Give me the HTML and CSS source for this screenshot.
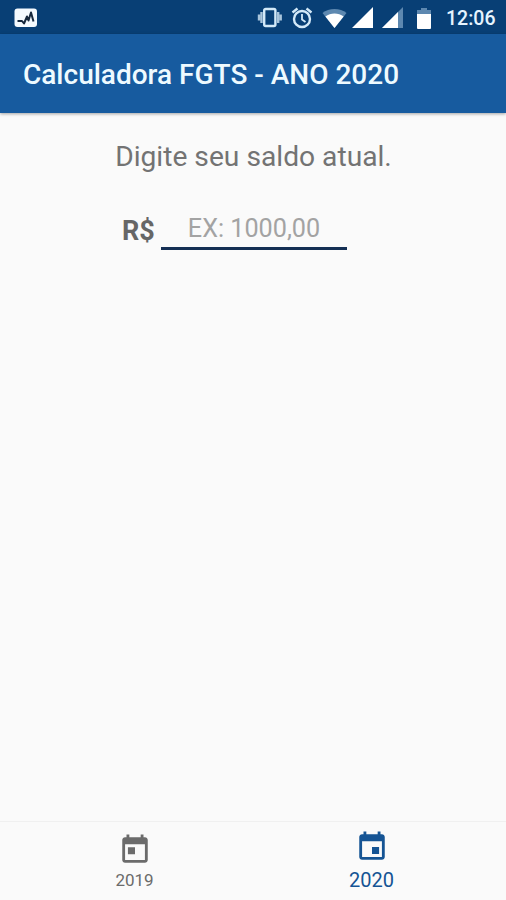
FILE: index.html
```
<!DOCTYPE html>
<html lang="pt-BR">
    <head>
        <meta charset="utf-8">
        <title>Calculadora FGTS</title>
        <link rel="stylesheet" href="styles.css">
    </head>
    <body>
        <div class="status">
            <svg class="activity" width="24" height="20" viewBox="0 0 24 20">
                <rect x="0.5" y="0.5" width="22.500" height="18.500" rx="3" fill="#f4faff"/>
                <path d="M3.500 13H8l2 2.500 3-7 1.500 4L17 4.500l2.500 9" fill="none" stroke="#16283d" stroke-width="2" stroke-linejoin="round"/>
            </svg>
            <div class="status-icons">
                <!-- vibrate -->
                <svg width="28" height="22" viewBox="0 0 28 22">
                    <rect x="8.200" y="2" width="11.200" height="17" rx="1.500" fill="none" stroke="#d3e9f8" stroke-width="2.400"/>
                    <path d="M5.500 5v11M22.200 5v11M3 7.500v6M24.700 7.500v6" stroke="#a9c5dc" stroke-width="2.400"/>
                </svg>
                <!-- alarm -->
                <svg class="alarm" width="22" height="22" viewBox="0 0 22 22">
                    <circle cx="11" cy="12" r="8" fill="none" stroke="#d3e9f8" stroke-width="2.400"/>
                    <path d="M1.500 5.500l5-4M20.500 5.500l-5-4" stroke="#d3e9f8" stroke-width="2.400"/>
                    <path d="M11 7v5.500l3.500 2.500" fill="none" stroke="#d3e9f8" stroke-width="1.800"/>
                </svg>
                <!-- wifi -->
                <svg class="wifi" width="25" height="20" viewBox="0 0 26 20" preserveAspectRatio="none">
                    <path d="M13 20L0.500 5C7-0.500 19-0.500 25.500 5z" fill="#5d88b0"/>
                    <path d="M13 20L3.500 8.500C9 4.500 17 4.500 22.500 8.500z" fill="#fff"/>
                </svg>
                <!-- signal, sim 1 and sim 2 -->
                <svg class="signal" width="21" height="21" viewBox="0 0 21 21">
                    <path d="M0 21L21 0v21z" fill="#fff"/>
                </svg>
                <svg class="signal2" width="21" height="21" viewBox="0 0 21 21">
                    <path d="M0 21L21 0v21z" fill="#5d88b0"/>
                    <path d="M0 21L16 5v16z" fill="#fff"/>
                </svg>
                <!-- battery -->
                <svg class="battery" width="14" height="21" viewBox="0 0 14 21">
                    <path d="M4 0h6v2h4v5H0V2h4z" fill="#5d88b0"/>
                    <path d="M0 6h14v14a1 1 0 0 1-1 1H1a1 1 0 0 1-1-1z" fill="#fff"/>
                </svg>
                <span class="clock">12:06</span>
            </div>
        </div>
        <h1 class="header">Calculadora FGTS - ANO 2020</h1>
        <div class="content">
            <p class="label">Digite seu saldo atual.</p>
            <div class="row">
                <span class="currency">R$</span>
                <input class="saldo" type="text" placeholder="EX: 1000,00">
            </div>
        </div>
        <div class="tabs">
            <div class="tab">
                <svg width="34" height="34" viewBox="0 0 24 24">
                    <path fill="currentColor" d="M19 3h-1V1h-2v2H8V1H6v2H5c-1.110 0-1.990.9-1.990 2L3 19c0 1.100.89 2 2 2h14c1.100 0 2-.9 2-2V5c0-1.100-.9-2-2-2zm0 16H5V8h14v11zM7 10h5v5H7z"/>
                </svg>
                <span>2019</span>
            </div>
            <div class="tab active">
                <svg width="34" height="34" viewBox="0 0 24 24">
                    <path fill="currentColor" d="M17 12h-5v5h5v-5zM16 1v2H8V1H6v2H5c-1.110 0-1.990.9-1.990 2L3 19c0 1.100.89 2 2 2h14c1.100 0 2-.9 2-2V5c0-1.100-.9-2-2-2h-1V1h-2zm3 18H5V8h14v11z"/>
                </svg>
                <span>2020</span>
            </div>
        </div>
    </body>
</html>
```
FILE: styles.css
```
* {
    box-sizing: border-box;
}

body {
    margin: 0;
    height: 900px;
    display: flex;
    flex-direction: column;
    overflow: hidden;
    background-color: #fafafa;
    font-family: Roboto, "Liberation Sans", sans-serif;
}

svg {
    display: block;
    flex: none;
}

    /*status bar*/

.status {
    display: flex;
    justify-content: space-between;
    height: 34px;
    padding: 7px 11px 0 14px;
    background-color: #083f75;
}

.activity {
    margin-top: 1px;
}

.status-icons {
    display: flex;
}

.alarm {
    margin-left: 7px;
}

.wifi {
    margin: 1px 0 0 9px;
}

.signal {
    margin-left: 5px;
}

.signal2 {
    margin-left: 9px;
}

.battery {
    margin: 1px 0 0 14px;
}

.clock {
    width: 49px;
    margin-left: 15px;
    color: #e6f4ff;
    font-size: 19.5px;
    font-weight: 500;
    line-height: 24px;
    white-space: nowrap;
}

    /*title bar*/

.header {
    height: 79px;
    margin: 0;
    padding-left: 23px;
    background-color: #175b9f;
    box-shadow: 0 1px 3px rgba(0, 0, 0, 0.35);
    color: #eefaff;
    font-size: 28px;
    font-weight: 500;
    line-height: 82px;
}

    /*form*/

.content {
    flex: 1;
    display: flex;
    flex-direction: column;
    align-items: center;
}

.label {
    margin: 26px 0 0;
    padding-left: 1px;
    color: #737373;
    font-size: 28.2px;
    line-height: 35px;
}

.row {
    display: flex;
    width: 262px;
    margin-top: 36px;
}

.currency {
    width: 39px;
    color: #666;
    font-size: 27px;
    font-weight: 700;
    line-height: 42px;
}

.saldo {
    width: 186px;
    height: 40px;
    padding: 0;
    border: none;
    border-bottom: 3px solid #142f54;
    background: none;
    font-family: inherit;
    font-size: 25.2px;
    text-align: center;
}

.saldo::placeholder {
    color: #a3a3a3;
}

    /*bottom tabs*/

.tabs {
    display: flex;
    height: 79px;
    padding: 0 16px;
    border-top: 1px solid #f0f0f0;
}

.tab {
    flex: 1;
    display: flex;
    flex-direction: column;
    align-items: center;
    padding-top: 11px;
    color: #6b6b6b;
    font-size: 17px;
    line-height: 27px;
}

.active {
    padding-top: 8px;
    color: #155494;
    font-size: 20px;
    line-height: 33px;
}
```
